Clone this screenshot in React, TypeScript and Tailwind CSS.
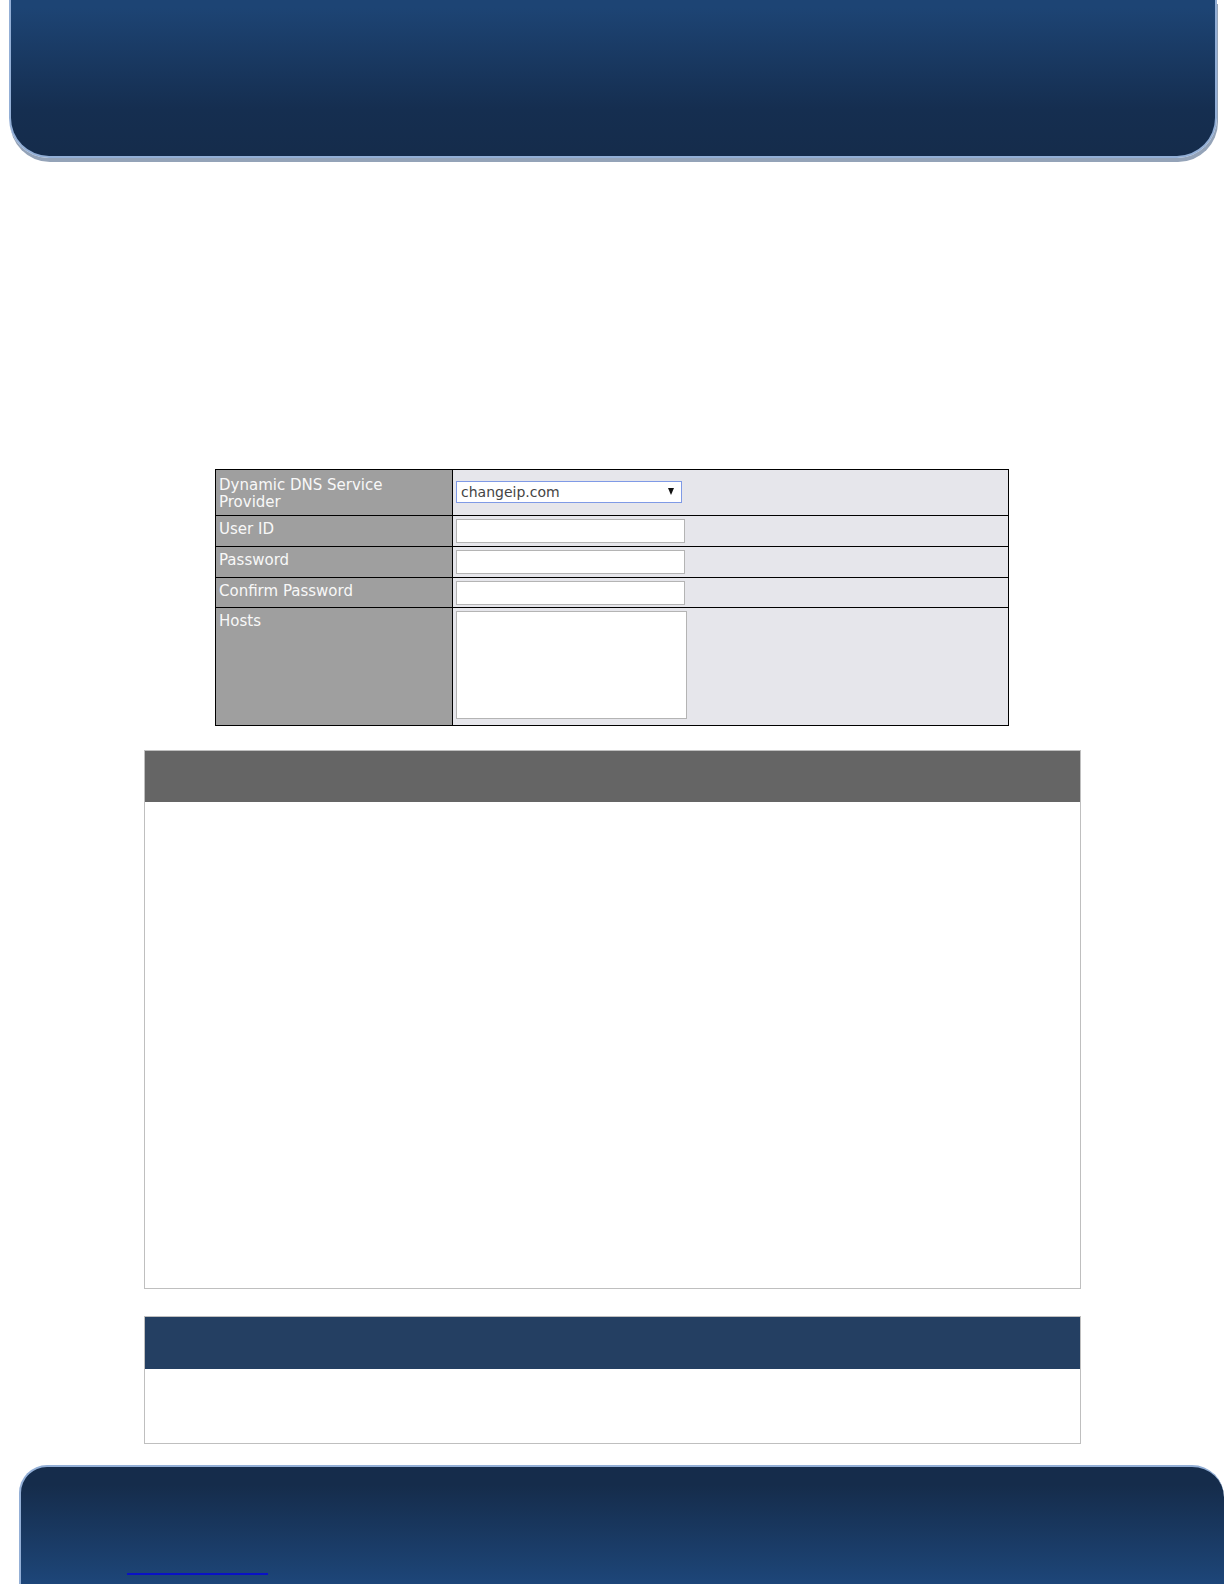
const textFields = [
  { id: "user-id", label: "User ID", type: "text", row: "h-[31px]" },
  { id: "password", label: "Password", type: "password", row: "h-[31px]" },
  { id: "confirm-password", label: "Confirm Password", type: "password", row: "h-[30px]" },
];

const labelCell =
  "w-[237px] border border-black bg-[#9f9f9f] px-[3px] text-left align-top text-[15px] leading-[17px] font-normal text-[#f8f8f8]";
const fieldCell = "border border-black bg-[#e6e6eb] px-[3px]";

function DynamicDnsForm() {
  return (
    <form className="mx-[215px]">
      <table className="w-full table-fixed border-collapse">
        <tbody>
          <tr className="h-[46px]">
            <th scope="row" className={labelCell + " pt-[7px]"}>
              <label htmlFor="provider" className="block max-w-[180px]">
                Dynamic DNS Service Provider
              </label>
            </th>
            <td className={fieldCell + " pt-[11px] align-top"}>
              <div className="relative w-[226px] max-w-full">
                <select
                  id="provider"
                  defaultValue="changeip.com"
                  className="block h-[22px] w-full appearance-none border border-[#7f9ae6] bg-white px-1 text-[14px] leading-[20px] text-[#444444] outline-none"
                >
                  <option>changeip.com</option>
                </select>
                <svg
                  viewBox="0 0 6 7"
                  className="pointer-events-none absolute right-2 top-[7px] h-[7px] w-[6px]"
                  aria-hidden="true"
                >
                  <path d="M0 0H6L3 7Z" fill="#111" />
                </svg>
              </div>
            </td>
          </tr>
          {textFields.map((field) => (
            <tr key={field.id} className={field.row}>
              <th scope="row" className={labelCell + " pt-[5px]"}>
                <label htmlFor={field.id}>{field.label}</label>
              </th>
              <td className={fieldCell}>
                <input
                  id={field.id}
                  type={field.type}
                  className="block h-[24px] w-[229px] max-w-full border border-[#b4b4b4] bg-white px-1 text-[14px] outline-none"
                />
              </td>
            </tr>
          ))}
          <tr className="h-[118px]">
            <th scope="row" className={labelCell + " pt-[5px]"}>
              <label htmlFor="hosts">Hosts</label>
            </th>
            <td className={fieldCell + " pt-[3px] align-top"}>
              <textarea
                id="hosts"
                className="block h-[108px] w-[231px] max-w-full resize-none border border-[#b4b4b4] bg-white px-1 text-[14px] outline-none"
              />
            </td>
          </tr>
        </tbody>
      </table>
    </form>
  );
}

export default function App() {
  return (
    <div className="flex min-h-screen flex-col bg-white font-['DejaVu_Sans',sans-serif]">
      <header className="ml-[9px] mr-[7px] h-[158px] rounded-b-[40px] border-x-2 border-b-2 border-[#93afd6] bg-linear-to-b from-[#1d4474] from-5% via-[#152e50] via-70% to-[#152c4b] shadow-[1px_4px_0_#94a3b8]" />

      <main className="flex-1 pt-[311px]">
        <DynamicDnsForm />
        <section className="ml-[144px] mr-[143px] mt-[24px] border border-[#bfbfbf]">
          <div className="h-[51px] bg-[#656565]" />
          <div className="h-[486px]" />
        </section>
        <section className="ml-[144px] mr-[143px] mt-[27px] border border-[#bfbfbf]">
          <div className="h-[52px] bg-[#243f62]" />
          <div className="h-[74px]" />
        </section>
      </main>

      <footer className="ml-[19px] h-[119px] overflow-hidden rounded-tl-[28px] rounded-tr-[32px] border-l-2 border-t-2 border-[#93afd6] bg-linear-to-b from-[#152c4b] from-15% to-[#1d4679] pl-[106px] pt-[99px]">
        <a
          href="#"
          aria-label="Website"
          className="block h-[9px] w-[141px] border-b-2 border-[#0a12c6]"
        />
      </footer>
    </div>
  );
}
